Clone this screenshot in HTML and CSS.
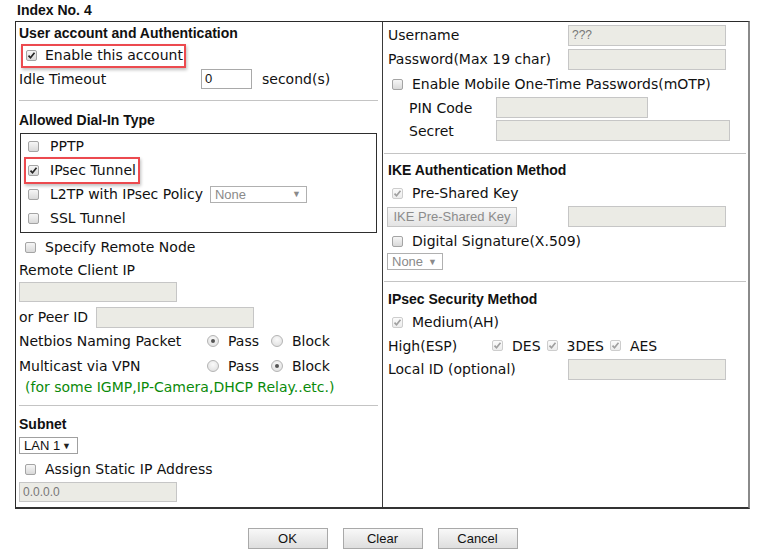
FILE: index.html
```html
<!DOCTYPE html>
<html>
<head>
<meta charset="utf-8">
<link rel="stylesheet" href="styles.css">
</head>
<body>
<div class="title">Index No. 4</div>
<div class="panel">
  <div class="col col-left">
    <div class="heading hd-top">User account and Authentication</div>
    <div class="row r-enable">
      <span class="mark mark-enable"></span>
      <span class="cb on"><svg viewBox="0 0 9 9"><path d="M1.5 4.6l2 2.2 4-5"/></svg></span>
      <span>Enable this account</span>
    </div>
    <div class="row r-idle">
      <span class="lab-idle">Idle Timeout</span>
      <span class="field field-white w50">0</span>
      <span class="unit">second(s)</span>
    </div>
    <div class="sep sep-l1"></div>
    <div class="heading hd-dial">Allowed Dial-In Type</div>
    <div class="dialbox">
      <div class="row brow"><span class="cb"></span><span>PPTP</span></div>
      <div class="row brow">
        <span class="mark mark-ipsec"></span>
        <span class="cb on"><svg viewBox="0 0 9 9"><path d="M1.5 4.6l2 2.2 4-5"/></svg></span><span>IPsec Tunnel</span>
      </div>
      <div class="row brow"><span class="cb"></span><span>L2TP with IPsec Policy</span><span class="sel sel-l2tp"><span>None</span><span class="arr">▼</span></span></div>
      <div class="row brow"><span class="cb"></span><span>SSL Tunnel</span></div>
    </div>
    <div class="row lrow r-spec"><span class="cb"></span><span>Specify Remote Node</span></div>
    <div class="row r-rcip">Remote Client IP</div>
    <div class="field w157 f-rcip"></div>
    <div class="row r-peer"><span class="lab-peer">or Peer ID</span><span class="field w158 h21"></span></div>
    <div class="row r-radio r-netbios">
      <span class="lab-radio">Netbios Naming Packet</span>
      <span class="rd on"></span><span class="rlab">Pass</span>
      <span class="rd"></span><span class="rlab">Block</span>
    </div>
    <div class="row r-radio">
      <span class="lab-radio">Multicast via VPN</span>
      <span class="rd"></span><span class="rlab">Pass</span>
      <span class="rd on"></span><span class="rlab">Block</span>
    </div>
    <div class="row r-green">(for some IGMP,IP-Camera,DHCP Relay..etc.)</div>
    <div class="sep sep-l2"></div>
    <div class="heading hd-subnet">Subnet</div>
    <div class="sel sel-lan"><span class="sel-dark">LAN 1</span><span class="arr dark">▼</span></div>
    <div class="row lrow r-assign"><span class="cb"></span><span>Assign Static IP Address</span></div>
    <div class="field w157 f-static">0.0.0.0</div>
  </div>
  <div class="col col-right">
    <div class="row rr r-user"><span class="lab-r">Username</span><span class="field w157 h21">???</span></div>
    <div class="row rr"><span class="lab-r">Password(Max 19 char)</span><span class="field w157 h21"></span></div>
    <div class="row rr rchk r-motp"><span class="cb"></span><span>Enable Mobile One-Time Passwords(mOTP)</span></div>
    <div class="row rr r-pin"><span class="lab-pin">PIN Code</span><span class="field w152 h21"></span></div>
    <div class="row rr r-pin"><span class="lab-pin">Secret</span><span class="field w233 h21"></span></div>
    <div class="sep sep-r1"></div>
    <div class="heading hd-r">IKE Authentication Method</div>
    <div class="row rr rchk r-gap2"><span class="cb dis on"><svg viewBox="0 0 9 9"><path d="M1.5 4.6l2 2.2 4-5"/></svg></span><span>Pre-Shared Key</span></div>
    <div class="row r-btn"><span class="btn-dis">IKE Pre-Shared Key</span><span class="field w157 h21"></span></div>
    <div class="row rr rchk r-gap2"><span class="cb"></span><span>Digital Signature(X.509)</span></div>
    <div class="sel sel-none"><span>None</span><span class="arr">▼</span></div>
    <div class="sep sep-r2"></div>
    <div class="heading hd-r">IPsec Security Method</div>
    <div class="row rr rchk r-gap2"><span class="cb dis on"><svg viewBox="0 0 9 9"><path d="M1.5 4.6l2 2.2 4-5"/></svg></span><span>Medium(AH)</span></div>
    <div class="row rr r-high">
      <span class="lab-high">High(ESP)</span>
      <span class="cb dis on"><svg viewBox="0 0 9 9"><path d="M1.5 4.6l2 2.2 4-5"/></svg></span><span class="alg">DES</span>
      <span class="cb dis on"><svg viewBox="0 0 9 9"><path d="M1.5 4.6l2 2.2 4-5"/></svg></span><span class="alg">3DES</span>
      <span class="cb dis on"><svg viewBox="0 0 9 9"><path d="M1.5 4.6l2 2.2 4-5"/></svg></span><span class="alg">AES</span>
    </div>
    <div class="row rr"><span class="lab-r">Local ID (optional)</span><span class="field w157 h21"></span></div>
  </div>
</div>
<div class="buttons">
  <span class="btn">OK</span>
  <span class="btn">Clear</span>
  <span class="btn">Cancel</span>
</div>
</body>
</html>
```
FILE: styles.css
```css
html, body { margin: 0; padding: 0; background: #fff; }
body {
  width: 759px; height: 560px; overflow: hidden;
  font-family: "DejaVu Sans", Verdana, sans-serif;
  font-size: 14px; color: #111;
}
.title {
  font-family: "Liberation Sans", Arial, sans-serif;
  font-weight: bold; font-size: 14px;
  height: 21px; line-height: 21px;
  padding-left: 17px; color: #111;
}
.panel {
  margin-left: 15px; width: 735px; height: 488px; box-sizing: border-box;
  border-top: 1px solid #2a2a2a; border-left: 1px solid #2a2a2a;
  border-bottom: 2px solid #333; border-right: 2px solid #8a8a8a;
  display: grid; grid-template-columns: 367px 1fr;
}
.col { display: flex; flex-direction: column; align-items: flex-start; }
.col-left { border-right: 1px solid #3a3a3a; padding-left: 3px; }
.col-right { padding-left: 5px; }

.heading {
  font-family: "Liberation Sans", Arial, sans-serif;
  font-weight: bold; font-size: 14px; color: #111;
  height: 19px; line-height: 19px; white-space: nowrap;
}
.hd-top { margin-top: 1px; height: 20px; line-height: 20px; }
.hd-dial { height: 19px; }
.hd-subnet { height: 18px; line-height: 18px; margin-top: 1px; }
.hd-r { height: 18px; line-height: 18px; margin-top: 0; }

.row { display: flex; align-items: center; white-space: nowrap; position: relative; }

/* checkbox */
.cb {
  width: 11px; height: 11px; box-sizing: border-box; flex: none;
  border: 1px solid #a4a4a4; border-radius: 2px;
  background: linear-gradient(#f6f6f6, #d9d9d9);
  display: inline-flex; align-items: center; justify-content: center;
}
.cb svg { width: 9px; height: 9px; fill: none; stroke: #262626; stroke-width: 1.7; }
.cb.dis { border-color: #cdcdcd; background: linear-gradient(#fbfbfb, #ececec); }
.cb.dis svg { stroke: #a0a0a0; }

/* radio */
.rd {
  width: 12px; height: 12px; box-sizing: border-box; flex: none;
  border: 1px solid #b4b4b4; border-radius: 50%;
  background: radial-gradient(circle at 50% 35%, #fafafa, #dcdcdc);
  display: inline-flex; align-items: center; justify-content: center;
}
.rd.on::after { content: ""; width: 4px; height: 4px; border-radius: 50%; background: #555; }

/* red highlight */
.mark {
  position: absolute; border: 2px solid #ec4a4f; box-sizing: border-box;
  box-shadow: 1px 2px 3px rgba(0,0,0,0.25);
}
.mark-enable { left: 2px; top: 1px; width: 165px; height: 24px; }
.mark-ipsec { left: 3px; top: -1px; width: 116px; height: 27px; }

.r-enable { height: 24px; padding-left: 7px; gap: 8px; width: 340px; }
.r-idle { height: 23px; }
.lab-idle { width: 182px; }
.unit { margin-left: 10px; }

.field {
  box-sizing: border-box; height: 20px;
  border: 1px solid #c6c6c6; background: #ebebe5;
  font-family: "Liberation Sans", Arial, sans-serif; font-size: 12px; color: #777;
  display: flex; align-items: center; padding-left: 3px; flex: none;
}
.field-white { background: #fff; border-color: #a9a9a9; color: #111; font-size: 13px; }
.h21 { height: 21px; }
.w50 { width: 51px; }
.w157 { width: 158px; }
.w158 { width: 158px; }
.w152 { width: 152px; }
.w233 { width: 234px; }

.sep { height: 1px; background: #c4c4c4; }
.sep-l1 { width: 359px; margin: 10px 0 10px; }
.sep-l2 { width: 359px; margin: 10px 0 8px; }
.sep-r1 { width: 362px; margin: 11px 0 7px -4px; }
.sep-r2 { width: 362px; margin: 11px 0 8px -4px; }

.dialbox {
  margin-top: 3px; margin-left: 1px; width: 357px; height: 100px; box-sizing: border-box;
  border: 1px solid #2e2e2e; display: flex; flex-direction: column;
}
.brow { height: 24px; padding-left: 7px; gap: 11px; }

.sel {
  box-sizing: border-box; height: 17px;
  border: 1px solid #b0b0b0; background: #fff;
  font-family: "Liberation Sans", Arial, sans-serif; font-size: 13px; color: #8a8a8a;
  display: flex; align-items: center; justify-content: space-between;
  padding: 0 5px 0 4px; flex: none;
}
.arr { font-size: 9px; color: #8a8a8a; }
.arr.dark { color: #222; }
.sel-dark { color: #111; }
.sel-l2tp { width: 97px; margin-left: -4px; }
.sel-lan { width: 59px; margin-top: 4px; border-color: #a0a0a0; padding-right: 6px; }
.sel-none { width: 56px; margin-left: -1px; }

.lrow { padding-left: 6px; gap: 9px; height: 24px; }
.r-spec { margin-top: 2px; }
.r-rcip { height: 21px; }
.f-rcip { margin-top: 2px; }
.r-peer { height: 24px; margin-top: 3px; }
.lab-peer { width: 77px; }
.r-radio { height: 25px; }
.r-netbios { height: 24px; }
.lab-radio { width: 188px; }
.rlab { margin-left: 9px; margin-right: 12px; }
.r-green { height: 17px; color: #0a8a0a; padding-left: 6px; }
.r-assign { margin-top: 3px; }
.f-static { margin-top: 1px; height: 20px; }

.rr { height: 24px; }
.r-user { margin-top: 1px; }
.r-motp { margin-top: 1px; }
.r-gap2 { margin-top: 2px; }
.lab-r { width: 180px; }
.rchk { padding-left: 4px; gap: 9px; }
.r-pin { height: 23px; padding-left: 21px; }
.lab-pin { width: 87px; }
.r-btn { height: 21px; gap: 51px; margin-left: -1px; margin-top: 1px; }
.btn-dis {
  box-sizing: border-box; width: 130px; height: 20px;
  border: 1px solid #c4c4c4; background: linear-gradient(#f7f7f7, #e4e4e4);
  font-family: "Liberation Sans", Arial, sans-serif; font-size: 13px; color: #8c8c8c;
  display: flex; align-items: center; justify-content: center;
}
.r-high { height: 23px; }
.lab-high { width: 104px; }
.alg { margin-left: 9px; margin-right: 6px; }

.buttons { display: flex; justify-content: center; gap: 15px; margin-top: 19px; width: 765px; }
.btn {
  box-sizing: border-box; width: 80px; height: 21px;
  border: 1px solid #a9a9a9; background: linear-gradient(#f8f8f8, #dedede);
  font-family: "Liberation Sans", Arial, sans-serif; font-size: 13px; color: #111;
  display: flex; align-items: center; justify-content: center;
}
```
